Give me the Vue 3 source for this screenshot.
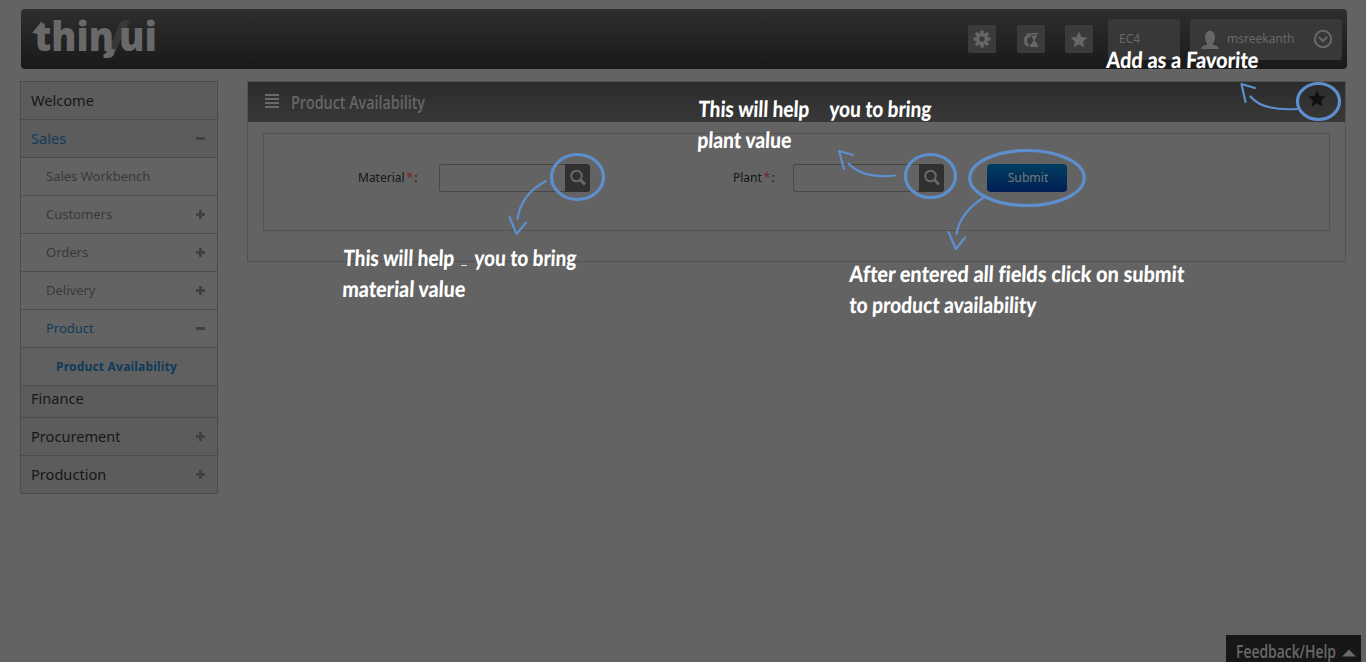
<script setup>
const menu = [
  { label: 'Welcome', level: 1 },
  { label: 'Sales', level: 1, sign: 'minus', active: true },
  { label: 'Sales Workbench', level: 2 },
  { label: 'Customers', level: 2, sign: 'plus' },
  { label: 'Orders', level: 2, sign: 'plus' },
  { label: 'Delivery', level: 2, sign: 'plus' },
  { label: 'Product', level: 2, sign: 'minus', active: true },
  { label: 'Product Availability', level: 3, active: true },
  { label: 'Finance', level: 1, short: true },
  { label: 'Procurement', level: 1, sign: 'plus' },
  { label: 'Production', level: 1, sign: 'plus' },
]

const notes = [
  { text: 'Add as a Favorite', x: 1106, y: 68, w: 152 },
  { text: 'This will help', x: 698, y: 117, w: 111 },
  { text: 'you to bring', x: 829, y: 117, w: 102 },
  { text: 'plant value', x: 697, y: 148, w: 94 },
  { text: 'This will help', x: 343, y: 266, w: 111 },
  { text: 'you to bring', x: 474, y: 266, w: 102 },
  { text: 'material value', x: 342, y: 297, w: 123 },
  { text: 'After entered all fields click on submit', x: 849, y: 281.5, w: 335 },
  { text: 'to product availability', x: 849, y: 313, w: 187 },
]

const star = 'M0-8.5 2.5-3 8.5-2.5 4 1.5 5.4 7.5 0 4.3-5.4 7.5-4 1.5-8.5-2.5-2.5-3Z'
</script>

<template>
  <div class="page">
    <header class="topbar">
      <svg class="logo" width="170" height="68" viewBox="0 -6 170 68">
        <path class="slash" d="M109 11h-4q-5 0-7 5L84 49h4q4 0 6-5Z" />
        <path class="mark" d="M11 24 21 12v12Z" />
        <text x="13" y="42" textLength="80" lengthAdjust="spacingAndGlyphs">thin</text>
        <path class="tail" d="M86 40h7.500v1q0 8-7 8h-4v-4q3.500 0 3.500-5Z" />
        <text x="98" y="42" textLength="38" lengthAdjust="spacingAndGlyphs">ui</text>
      </svg>
      <div class="tools">
        <span class="tool">
          <svg width="28" height="28" viewBox="-14 -14 28 28">
            <g class="gear">
              <circle r="4.4" />
              <path d="M0-8.5V-5M0 8.5V5M-8.5 0H-5M8.5 0H5M-6-6-3.5-3.5M6 6 3.5 3.5M-6 6-3.5 3.5M6-6 3.5-3.5" />
            </g>
          </svg>
        </span>
        <span class="tool">
          <svg width="28" height="28">
            <path class="arc" d="M12 10Q8.500 11.500 8.500 15.500 8.500 19.500 11.500 20.500" />
            <path class="fill" d="M9 8.500h5V13Z M14 8h7v1.500h-7Z M15 10.500h5q-.5 3-2.500 4.500h-1q-1.500-1.500-1.500-4.500Z M16.500 15h1q1 2 2.500 3v2h1v2h-8v-2q3-2 3.500-5Z" />
          </svg>
        </span>
        <span class="tool">
          <svg width="28" height="28" viewBox="-14 -15 28 28"><path class="fill" :d="star" /></svg>
        </span>
      </div>
      <div class="system">EC4</div>
      <div class="user">
        <svg width="18" height="20">
          <ellipse class="fill" cx="9" cy="7.500" rx="5" ry="7" />
          <path class="fill" d="M6 12h6v3q5 0 6 4H0q1-4 6-4Z" />
        </svg>
        <span class="name">msreekanth</span>
        <svg width="20" height="20">
          <circle class="ring" cx="10" cy="10" r="8.200" />
          <path class="ring" d="M5.800 8 10 12l4.200-4" />
        </svg>
      </div>
    </header>

    <div class="body">
      <nav class="menu">
        <div
          v-for="item in menu"
          :key="item.label"
          class="row"
          :class="['level' + item.level, { active: item.active, short: item.short }]"
        >
          <span>{{ item.label }}</span>
          <i v-if="item.sign" class="sign" :class="item.sign"></i>
        </div>
      </nav>

      <main class="panel">
        <div class="heading">
          <svg class="bars" width="14" height="15"><path d="M0 1h14M0 5h14M0 9h14M0 13h14" /></svg>
          <svg class="title" width="190" height="36">
            <text x="0" y="25" textLength="134" lengthAdjust="spacingAndGlyphs">Product Availability</text>
          </svg>
          <svg class="fav" width="18" height="18" viewBox="-9 -9 18 18"><path :d="star" /></svg>
        </div>
        <form class="fields" @submit.prevent>
          <label class="caption">Material<b>*</b>:</label>
          <div class="lookup">
            <input />
            <button type="button">
              <svg width="25" height="28"><circle cx="11.500" cy="12" r="5.300" /><path d="m15.500 16 4.500 4.500" /></svg>
            </button>
          </div>
          <label class="caption plant">Plant<b>*</b>:</label>
          <div class="lookup">
            <input />
            <button type="button">
              <svg width="25" height="28"><circle cx="11.500" cy="12" r="5.300" /><path d="m15.500 16 4.500 4.500" /></svg>
            </button>
          </div>
          <button class="submit">Submit</button>
        </form>
      </main>
    </div>

    <div class="feedback">
      <svg width="135" height="27">
        <text x="10" y="23" textLength="100" lengthAdjust="spacingAndGlyphs">Feedback/Help</text>
        <path d="M116 21.500 123 14.500l7 7Z" />
      </svg>
    </div>

    <svg class="guide" width="1366" height="662">
      <g class="circles">
        <ellipse cx="577.500" cy="177" rx="26" ry="22.500" />
        <ellipse cx="930.500" cy="176" rx="25" ry="21.500" />
        <ellipse cx="1027" cy="178" rx="57.200" ry="27.500" />
        <ellipse cx="1318.500" cy="101.500" rx="21" ry="18" />
      </g>
      <g class="arrows">
        <path d="M546 181Q521 194 517.500 219M509.500 217 516.500 234 526 222.500" />
        <path d="M895 175.500Q863 179 848.500 163.500M853 155 839 151 844 169" />
        <path d="M983 198Q960 213 956.500 234M948.500 232 956 249 965 237.500" />
        <path d="M1297 109Q1262 111 1250.500 96.500M1255 88 1241.500 84 1245.500 102" />
      </g>
      <path class="dash" d="M461 265.500h6" />
      <text
        v-for="note in notes"
        :key="note.x + '-' + note.y"
        :transform="`translate(${note.x} ${note.y}) skewX(-3)`"
        :textLength="note.w"
        lengthAdjust="spacingAndGlyphs"
      >{{ note.text }}</text>
    </svg>
  </div>
</template>

<style>
body { background: #636363; overflow: hidden; }
</style>

<style scoped>
.page {
  position: relative;
  box-sizing: border-box;
  width: 1366px;
  height: 662px;
  padding: 9px 19px 0 20px;
  background: #636363;
  font-family: "Noto Sans", "Open Sans", sans-serif;
  font-size: 13px;
  overflow: hidden;
}
svg { display: block; flex: none; }
.topbar {
  display: flex;
  align-items: flex-start;
  box-sizing: border-box;
  height: 60px;
  margin-left: 1px;
  padding: 10px 5px 0 0;
  border-radius: 4px;
  background: linear-gradient(#2e2e2e, #191919);
}
.logo { margin-top: -16px; font: 800 41px "Open Sans", sans-serif; fill: #696969; }
.slash { fill: #383838; }
.tools { display: flex; gap: 20.500px; margin: 6px 15px 0 auto; }
.tool { width: 28px; height: 28px; border-radius: 2px; background: #3b3b3b; }
.fill { fill: #666; }
.gear { fill: none; stroke: #666; stroke-width: 3.500; }
.arc { fill: none; stroke: #666; stroke-width: 3; }
.system, .user {
  box-sizing: border-box;
  height: 41px;
  border-radius: 3px;
  background: #383838;
  color: #696969;
  line-height: 39px;
}
.system { width: 72px; margin-right: 10px; padding-left: 11px; font-size: 12px; }
.user { display: flex; align-items: center; width: 152px; padding: 0 9px 0 11px; }
.name { width: 76px; margin: -2px 10px 0 8px; font-size: 12px; white-space: nowrap; }
.user svg:last-child { margin-top: -2px; }
.ring { fill: none; stroke: #686868; stroke-width: 2; }
.body { display: flex; align-items: flex-start; gap: 29px; margin-top: 12px; }
.menu { box-sizing: border-box; width: 198px; border: 1px solid #4c4c4c; border-bottom: 0; }
.row {
  display: flex;
  align-items: center;
  justify-content: space-between;
  box-sizing: border-box;
  height: 38px;
  padding: 0 12px 0 10px;
  border-bottom: 1px solid #4c4c4c;
  color: #393939;
}
.row span { margin-top: -2px; }
.level1 { background: #5c5c5c; color: #171717; font-size: 14.600px; }
.level2 { padding-left: 25px; }
.level3 { padding-left: 35px; background: #606060; font-size: 12px; font-weight: 700; letter-spacing: 0.2px; }
.level3 span { margin-top: 0; }
.row.active { color: #0f3b5b; }
.short { height: 32px; padding-bottom: 6px; }
.sign { width: 9px; height: 9px; }
.minus { background: linear-gradient(#414141, #414141) center / 9px 3px no-repeat; }
.plus {
  background:
    linear-gradient(#414141, #414141) center / 9px 3px no-repeat,
    linear-gradient(#414141, #414141) center / 3px 9px no-repeat;
}
.panel { box-sizing: border-box; width: 1099px; height: 181px; border: 1px solid #525252; }
.heading {
  display: flex;
  align-items: center;
  height: 40px;
  padding: 0 20px 0 17px;
  background: linear-gradient(#2c2c2c, #383838);
}
.bars { margin: -2px 12px 0 0; fill: none; stroke: #696969; stroke-width: 2; }
.title { font: 600 18px "Open Sans", sans-serif; fill: #666; }
.fav { margin: -7px -1px 0 auto; fill: #101010; }
.fields {
  display: flex;
  align-items: flex-start;
  box-sizing: border-box;
  height: 98px;
  margin: 11px 15px 0;
  padding: 30px 0 0 94px;
  border: 1px solid #535353;
}
.caption { width: 81px; line-height: 28px; color: #151515; font-size: 12px; white-space: nowrap; }
.caption b { margin: 0 1px 0 2px; color: #7d1f24; font-weight: 400; }
.plant { width: 60px; margin-left: 143px; }
.lookup { display: flex; width: 151px; height: 28px; }
.lookup input {
  box-sizing: border-box;
  width: 126px;
  height: 28px;
  padding: 0;
  border: 1px solid #484848;
  border-right: 0;
  border-radius: 3px 0 0 3px;
  background: #636363;
}
.lookup button { width: 25px; padding: 0; border: 0; border-radius: 0 3px 3px 0; background: #303030; }
.lookup svg { fill: none; stroke: #686868; stroke-width: 2; }
.lookup path { stroke-width: 3; }
.submit {
  width: 80px;
  height: 28px;
  margin-left: 43px;
  padding: 0 0 1px 2px;
  border: 0;
  border-radius: 4px;
  background: linear-gradient(#003e60, #001f55);
  color: #777;
  font: 12.200px "Noto Sans", sans-serif;
}
.feedback { position: absolute; right: 5px; bottom: 0; background: #161616; }
.feedback svg { font: 600 18px "Open Sans", sans-serif; fill: #696969; }
.guide { position: absolute; inset: 0; pointer-events: none; fill: #fff; font: 900 22.500px Lato, sans-serif; font-variant-ligatures: none; }
.circles { fill: none; stroke: #5d8fcf; stroke-width: 3.200; }
.arrows { fill: none; stroke: #5d8fcf; stroke-width: 2.200; stroke-linecap: round; stroke-linejoin: round; }
.dash { stroke: #ddd; stroke-width: 1; }
</style>
